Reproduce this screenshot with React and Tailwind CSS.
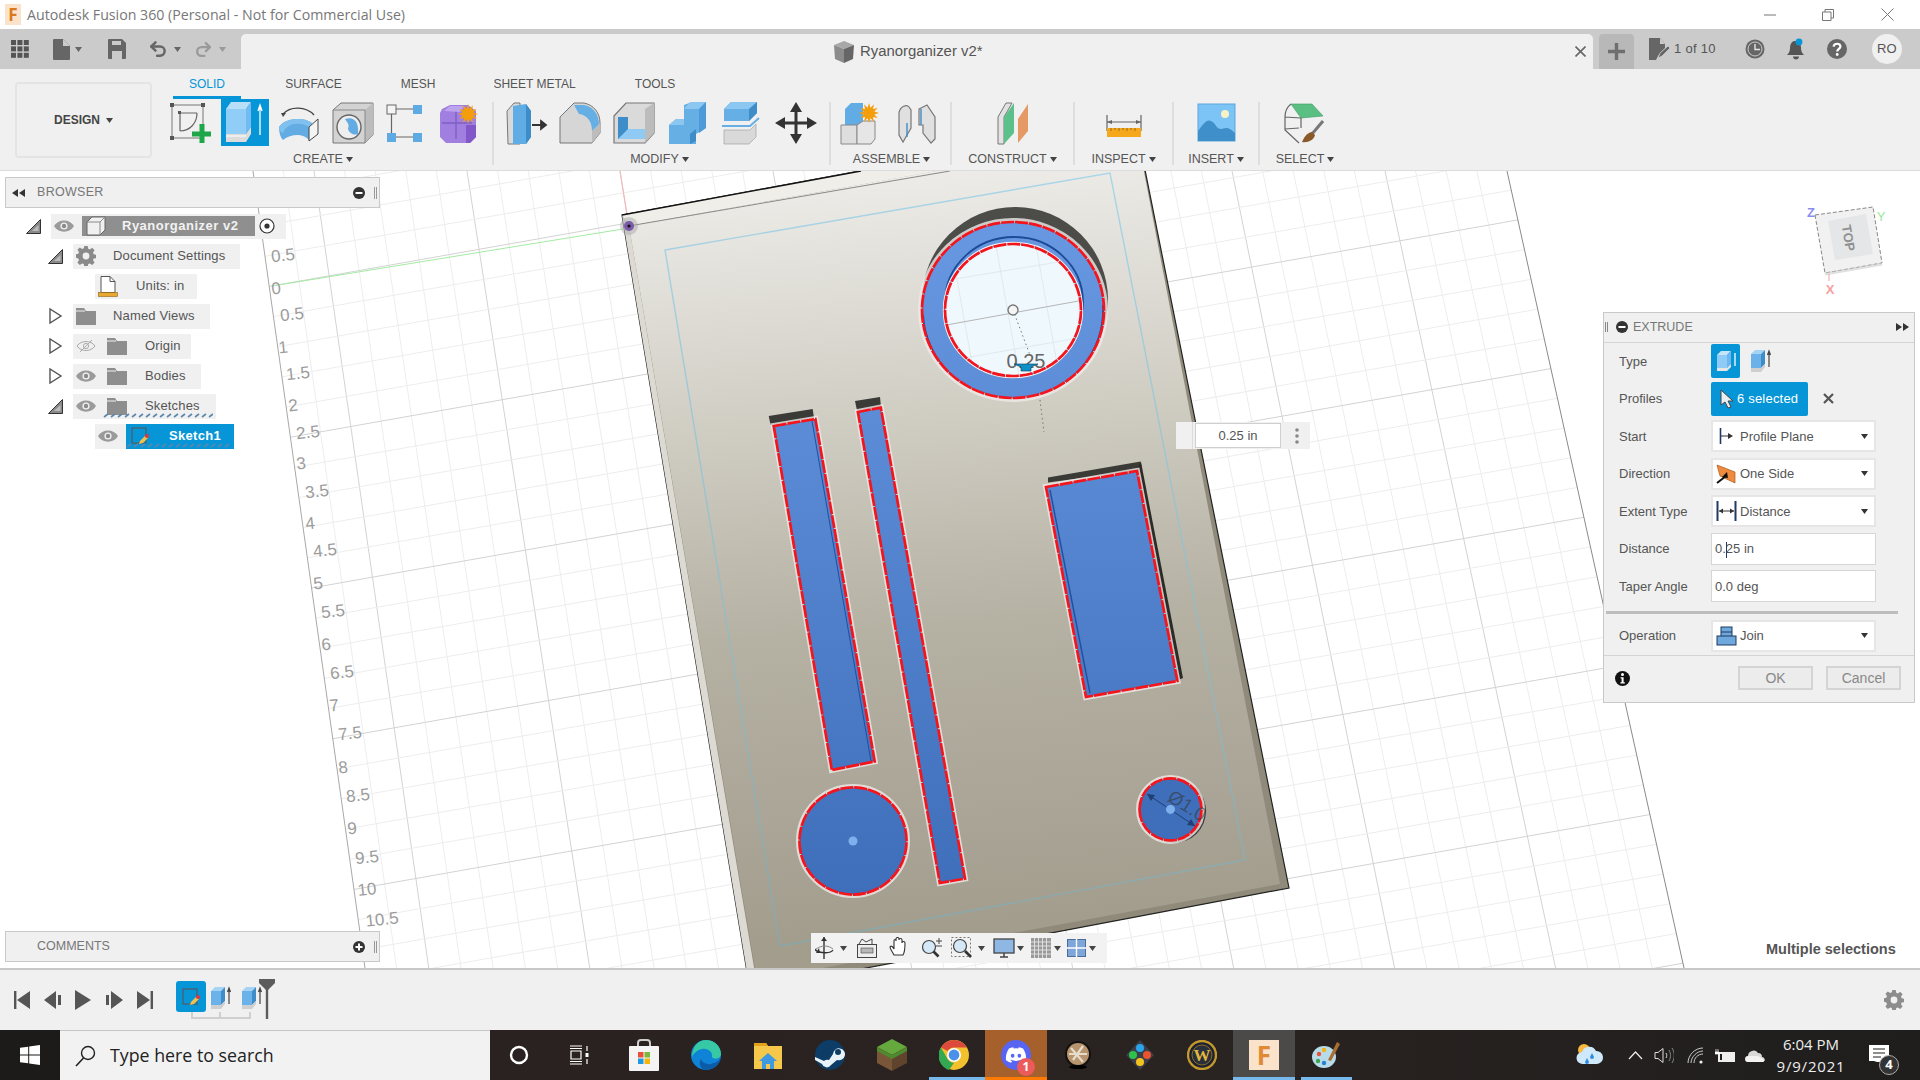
import React from "react";
import { Undo2, Redo2 } from "lucide-react";
import { FaDiscord } from "react-icons/fa";

// shared little glyphs
const Caret = ({ className = "", fill = "#444" }) => (
  <svg width="7" height="5" viewBox="0 0 7 5" className={className}>
    <path d="M0 0h7L3.5 5z" fill={fill} />
  </svg>
);

const Ico = ({ children, w = 44, h = 44, className = "" }) => (
  <svg width={w} height={h} viewBox={`0 0 ${w} ${h}`} className={`shrink-0 ${className}`}>
    {children}
  </svg>
);

const Star = ({ x, y, r = 9 }) => {
  const pts = [];
  for (let i = 0; i < 24; i++) {
    const a = (i * Math.PI) / 12;
    const rr = i % 2 ? r * 0.55 : r;
    pts.push(`${x + rr * Math.cos(a)},${y + rr * Math.sin(a)}`);
  }
  return <polygon points={pts.join(" ")} fill="#f59e0b" />;
};

const Gear = ({ size = 20, fill = "#8a8a8a" }) => (
  <svg width={size} height={size} viewBox="0 0 20 20" className="shrink-0">
    <path
      fill={fill}
      fillRule="evenodd"
      d="M8.3 0h3.4l.5 2.7 1.7.7 2.3-1.6 2.4 2.4-1.6 2.3.7 1.7 2.7.5v3.4l-2.7.5-.7 1.7 1.6 2.3-2.4 2.4-2.3-1.6-1.7.7-.5 2.7H8.3l-.5-2.7-1.7-.7-2.3 1.6-2.4-2.4 1.6-2.3-.7-1.7L-.4 11.7V8.3l2.7-.5.7-1.7-1.6-2.3 2.4-2.4 2.3 1.6 1.7-.7zM10 6.6a3.4 3.4 0 1 0 0 6.8 3.4 3.4 0 0 0 0-6.8z"
    />
  </svg>
);

const Eye = ({ off }) => (
  <svg width="20" height="14" viewBox="0 0 20 14" className="shrink-0">
    {off ? (
      <g fill="none" stroke="#aaa" strokeWidth="1">
        <path d="M1 7c4-6 14-6 18 0-4 6-14 6-18 0z" />
        <circle cx="10" cy="7" r="2.6" />
        <path d="M4 13 16 1" />
      </g>
    ) : (
      <g>
        <path d="M0 7c4-7.5 16-7.5 20 0-4 7.5-16 7.5-20 0z" fill="#9a9a9a" />
        <circle cx="10" cy="7" r="3.6" fill="#f0f0f0" />
        <circle cx="10" cy="7" r="2.2" fill="#8a8a8a" />
      </g>
    )}
  </svg>
);

const Folder = () => (
  <svg width="20" height="17" viewBox="0 0 20 17" className="shrink-0">
    <path d="M0 0h8l2 3h10v14H0z" fill="#8e8e8e" />
    <path d="M0 3h9" stroke="#f0f0f0" strokeWidth="1" />
  </svg>
);

const SketchMini = () => (
  <svg width="20" height="20" viewBox="0 0 20 20" className="shrink-0">
    <rect x="2" y="2" width="14" height="15" fill="none" stroke="#505a66" strokeWidth="1.2" />
    <path d="m10 15 5-5 3 2-5 5-4 1z" fill="#f2c14e" />
    <circle cx="17" cy="10" r="2" fill="#e5343a" />
  </svg>
);

const ExtrudeMini = ({ w = 22, h = 24 }) => (
  <svg width={w} height={h} viewBox="0 0 22 24" className="shrink-0">
    <polygon points="1,5 5,1 15,1 11,5" fill="#a5d3f4" />
    <polygon points="1,5 11,5 11,19 1,19" fill="#6cb2ea" />
    <polygon points="11,5 15,1 15,15 11,19" fill="#3f8dc8" />
    <polygon points="1,19 11,19 15,15 15,18 11,23 1,23" fill="#cfcfcf" />
    <path d="M19 18V3M17.5 6 19 2l1.5 4" fill="none" stroke="#444" strokeWidth="1.2" />
  </svg>
);

const Squiggle = ({ className }) => (
  <svg height="5" className={`absolute ${className}`} width="100%">
    <defs>
      <pattern id="squig" width="7" height="5" patternUnits="userSpaceOnUse">
        <path d="M1 4 5 1" stroke="#5b86ad" strokeWidth="1.6" />
      </pattern>
    </defs>
    <rect width="100%" height="5" fill="url(#squig)" />
  </svg>
);

// ---- ribbon icons ----
const SketchIcon = () => (
  <Ico>
    <rect x="3" y="4" width="31" height="33" fill="none" stroke="#777" strokeWidth="1" />
    {[[1, 2], [32, 2], [1, 35]].map(([x, y]) => (
      <rect key={x + "-" + y} x={x} y={y} width="4" height="4" fill="#555" />
    ))}
    <path d="M11 12h17M11 12v18M28 12c0 10-7 18-17 18" fill="none" stroke="#666" strokeWidth="1.2" />
    <rect x="9" y="10" width="3" height="3" fill="#555" />
    <path d="M33 23v19M23 33h19" stroke="#1ea64a" strokeWidth="5" />
  </Ico>
);

const ExtrudeIcon = () => (
  <div className="flex h-[47px] w-[48px] shrink-0 items-center justify-center bg-[#0696d7]">
    <Ico w={48} h={47}>
      <polygon points="5,10 10,3 30,3 25,10" fill="#b9def8" />
      <polygon points="5,10 25,10 25,35 5,35" fill="#90cdf7" />
      <polygon points="25,10 30,3 30,28 25,35" fill="#72bbf0" />
      <polygon points="5,35 25,35 30,28 30,35 25,43 5,43" fill="#dcdcdc" />
      <path d="M5 37h20" stroke="#fff" strokeWidth="1" />
      <path d="M39 36V7M37 12l2-6 2 6" fill="none" stroke="#fff" strokeWidth="1.3" />
    </Ico>
  </div>
);

const RevolveIcon = () => (
  <Ico>
    <path d="M6 13C13 5 29 5 37 14" fill="none" stroke="#444" strokeWidth="1.3" />
    <path d="M4 12 6 16 9 12z" fill="#444" />
    <path d="M2 26c6-10 26-10 33-4l-3 17c-6-7-18-6-26 0-3-3-4-8-4-13z" fill="#62ace3" />
    <path d="M2 26c6-10 26-10 33-4l-3 4c-8-5-22-5-26 6-3-1-4-4-4-6z" fill="#7fc0ef" />
    <polygon points="32,26 41,18 41,33 32,40" fill="#f4f4f4" stroke="#444" strokeWidth="1" />
  </Ico>
);

const HoleIcon = () => (
  <Ico>
    <polygon points="2,9 10,2 42,2 42,34 34,42 2,42" fill="#d3d3d3" stroke="#777" strokeWidth="1" />
    <polygon points="34,9 42,2 42,34 34,42" fill="#bcbcbc" />
    <path d="M2 9h32v33" fill="none" stroke="#888" strokeWidth="1" />
    <ellipse cx="18" cy="26" rx="12" ry="12" fill="#eee" stroke="#666" strokeWidth="1.4" />
    <path d="M14 18c10-3 14 4 13 15-5 2-10-2-10-6 2-3-1-6-3-9z" fill="#62ace3" />
  </Ico>
);

const PatternIcon = () => (
  <Ico>
    <rect x="5" y="4" width="9" height="9" fill="#f4f4f4" stroke="#666" />
    <rect x="31" y="4" width="9" height="9" fill="#5eaae3" />
    <rect x="5" y="32" width="9" height="9" fill="#5eaae3" />
    <rect x="31" y="32" width="9" height="9" fill="#5eaae3" />
    <path d="M14 8h17M14 36h17M9.5 13v19" stroke="#666" strokeWidth="1.2" />
  </Ico>
);

const FormIcon = () => (
  <Ico>
    <path d="M6 8 14 4h18l8 6v26l-6 6H10l-6-6V12z" fill="#a07fe0" />
    <path d="M6 22h30M20 8v30" stroke="#7f5fc4" strokeWidth="1.4" />
    <path d="M30 24h10v12l-6 6h-4z" fill="#8258c9" />
    <path d="M8 10 14 5h14l-4 6z" fill="#bca4ee" />
    <Star x={32} y={13} r={10} />
  </Ico>
);

const PressPullIcon = () => (
  <Ico>
    <polygon points="3,10 10,2 16,2 16,43 4,43" fill="#d9d9d9" stroke="#777" strokeWidth="1" />
    <polygon points="9,5 22,3 27,10 27,36 22,43 9,43" fill="#60ace5" />
    <polygon points="22,3 27,10 27,36 22,43" fill="#3e8dc9" />
    <path d="M28 24h12M37 20l5 4-5 4z" stroke="#333" strokeWidth="1.8" fill="#333" />
  </Ico>
);

const FilletIcon = () => (
  <Ico>
    <path d="M2 16 16 2h10c10 2 16 10 16 20v10l-8 10H2z" fill="#d6d6d6" stroke="#777" strokeWidth="1" />
    <path d="M16 4h10c10 2 15 10 15 20l-7 6c0-10-5-16-13-17z" fill="#66afe5" />
    <polygon points="34,30 42,22 42,32 34,42" fill="#bcbcbc" />
  </Ico>
);

const ChamferIcon = () => (
  <Ico>
    <polygon points="2,15 14,2 42,2 42,32 33,42 2,42" fill="#dadada" stroke="#777" strokeWidth="1.2" />
    <polygon points="33,8 42,2 42,32 33,42" fill="#bcbcbc" />
    <polygon points="6,16 16,16 16,28 33,28 33,38 6,38" fill="#3f8dc8" />
    <polygon points="16,28 33,28 33,38 6,38" fill="#8fcaf5" />
  </Ico>
);

const CombineIcon = () => (
  <Ico>
    <polygon points="3,24 10,18 18,18 18,4 26,1 40,1 40,27 30,33 30,43 3,43" fill="#66afe5" />
    <polygon points="18,8 24,1 40,1 33,8" fill="#8cc7f2" />
    <polygon points="33,8 40,1 40,27 33,32" fill="#4c9bd8" />
    <polygon points="3,24 10,18 18,18 18,24" fill="#8cc7f2" />
    <polygon points="24,33 30,28 30,40 24,43" fill="#3f8dc8" />
  </Ico>
);

const OffsetIcon = () => (
  <Ico>
    <polygon points="4,8 11,1 37,1 37,12 29,20 4,20" fill="#66afe5" />
    <polygon points="4,8 11,1 37,1 29,8" fill="#8cc7f2" />
    <polygon points="29,8 37,1 37,12 29,20" fill="#3f8dc8" />
    <path d="M2 25h28l9-8" fill="none" stroke="#66afe5" strokeWidth="2" />
    <polygon points="4,29 30,29 36,23 36,36 29,43 4,43" fill="#d9d9d9" stroke="#999" strokeWidth=".6" />
  </Ico>
);

const MoveIcon = () => (
  <Ico>
    <path d="M22 5v34M5 22h34" stroke="#333" strokeWidth="3" />
    <path d="m22 1 6 10H16zM22 43l6-10H16zM1 22l10-6v12zM43 22l-10-6v12z" fill="#333" />
  </Ico>
);

const ComponentIcon = () => (
  <Ico>
    <polygon points="6,8 12,2 24,2 24,26 6,26" fill="#62ace5" />
    <polygon points="2,24 18,24 18,43 2,43" fill="#dedede" stroke="#888" strokeWidth="1" />
    <polygon points="18,24 24,20 36,20 36,38 32,43 18,43" fill="#e6e6e6" stroke="#888" strokeWidth="1" />
    <Star x={30} y={12} r={10} />
  </Ico>
);

const JointIcon = () => (
  <Ico>
    <path d="M4 12c1-7 8-9 10-6l2 3v18l-8 14-4-7z" fill="#e0e0e0" stroke="#777" strokeWidth="1.2" />
    <path d="M24 8l8-4 8 12v22l-4 4-8-10V24h-4z" fill="#e0e0e0" stroke="#777" strokeWidth="1.2" />
    <path d="M12 22v14M26 8v16" stroke="#3f8dc8" strokeWidth="1.4" />
  </Ico>
);

const ConstructIcon = () => (
  <Ico>
    <polygon points="7,16 15,2 21,2 13,16 13,43 7,43" fill="#e2e2e2" stroke="#777" strokeWidth="1" />
    <polygon points="13,16 23,2 23,32 13,43" fill="#5cc08a" />
    <polygon points="27,18 37,3 37,30 27,42" fill="#e59a66" />
  </Ico>
);

const InspectIcon = () => (
  <Ico>
    <path d="M5 14v16M39 14v16M5 21h34" stroke="#666" strokeWidth="1.2" fill="none" />
    <path d="m5 21 5-2v4zM39 21l-5-2v4z" fill="#666" />
    <rect x="5" y="27" width="34" height="9" fill="#f5a81c" />
    <path d="M9 27v3M13 27v2M17 27v3M21 27v2M25 27v3M29 27v2M33 27v3" stroke="#8a5a10" strokeWidth=".8" />
  </Ico>
);

const InsertIcon = () => (
  <Ico>
    <rect x="4" y="3" width="37" height="37" fill="#7cc4f5" stroke="#5aa6dc" />
    <circle cx="31" cy="13" r="4" fill="#f7f3c6" />
    <path d="M4 40V30c6-8 9-12 13-10 5 2 5 8 10 8 3 0 6-4 14 4v8z" fill="#3f8fca" />
  </Ico>
);

const SelectIcon = () => (
  <Ico>
    <polygon points="8,3 29,3 40,15 18,17" fill="#5bbf84" stroke="#3d9a63" strokeWidth=".6" />
    <path d="M8 3c-4 3-6 8-6 13l16 1M2 16v13l14 13M18 17v10M2 28l14-1" fill="none" stroke="#666" strokeWidth="1.2" />
    <path d="m40 20-11 13" stroke="#777" strokeWidth="3" />
    <path d="M29 31c-6 1-8 6-10 10 6 1 12-2 13-7z" fill="#8a5a2b" />
  </Ico>
);

const Cell = ({ children, className = "w-[54px]" }) => (
  <div className={`flex shrink-0 items-center justify-center ${className}`}>{children}</div>
);

const Group = ({ label, className, labelClass = "", children }) => (
  <div className={`flex shrink-0 flex-col ${className}`}>
    <div className="flex h-[47px] items-center">{children}</div>
    <div className={`mt-[4px] flex items-center justify-center gap-[3px] text-[12.5px] text-[#555] ${labelClass}`}>
      {label}
      <Caret />
    </div>
  </div>
);

const Divider = () => <div className="mt-[3px] h-[63px] w-[2px] shrink-0 bg-[#dedede]" />;

const Ribbon = () => (
  <div className="flex h-[102px] shrink-0 border-b border-[#dcdcdc] bg-[#f0f0f0] pl-[15px]">
    <div className="mt-[13px] flex h-[76px] w-[137px] items-center justify-center gap-[6px] rounded-[4px] border-2 border-[#e4e4e4] text-[12px] font-bold text-[#444]">
      DESIGN
      <Caret />
    </div>
    <div className="ml-[12px] flex flex-col">
      <div className="flex h-[30px] pl-[9px] text-[12px] text-[#555]">
        <div className="flex w-[68px] items-center justify-center border-b-[3px] border-[#0696d7] pt-[2px] text-[#0696d7]">SOLID</div>
        <div className="flex w-[145px] items-center justify-center">SURFACE</div>
        <div className="flex w-[64px] items-center justify-center">MESH</div>
        <div className="flex w-[169px] items-center justify-center">SHEET METAL</div>
        <div className="flex w-[72px] items-center justify-center">TOOLS</div>
      </div>
      <div className="flex">
        <Group label="CREATE" className="w-[328px]" labelClass="mr-[10px]">
          <Cell><SketchIcon /></Cell>
          <Cell><ExtrudeIcon /></Cell>
          <Cell><RevolveIcon /></Cell>
          <Cell><HoleIcon /></Cell>
          <Cell className="w-[48px]"><PatternIcon /></Cell>
          <Cell className="w-[60px]"><FormIcon /></Cell>
        </Group>
        <Divider />
        <Group label="MODIFY" className="w-[335px] pl-[4px]" labelClass="mr-[8px]">
          <Cell className="w-[55px]"><PressPullIcon /></Cell>
          <Cell><FilletIcon /></Cell>
          <Cell><ChamferIcon /></Cell>
          <Cell><CombineIcon /></Cell>
          <Cell><OffsetIcon /></Cell>
          <Cell><MoveIcon /></Cell>
        </Group>
        <Divider />
        <Group label="ASSEMBLE" className="w-[119px] pl-[2px]">
          <Cell className="w-[56px]"><ComponentIcon /></Cell>
          <Cell className="w-[56px]"><JointIcon /></Cell>
        </Group>
        <Divider />
        <Group label="CONSTRUCT" className="w-[121px] items-center"><ConstructIcon /></Group>
        <Divider />
        <Group label="INSPECT" className="w-[97px] items-center"><InspectIcon /></Group>
        <Divider />
        <Group label="INSERT" className="w-[84px] items-center"><InsertIcon /></Group>
        <Divider />
        <Group label="SELECT" className="w-[90px] items-center"><SelectIcon /></Group>
      </div>
    </div>
  </div>
);

const TitleBar = () => (
  <div className="flex h-[29px] shrink-0 items-center bg-white font-['Open_Sans',sans-serif]">
    <div className="ml-[5px] flex h-[21px] w-[16px] items-center justify-center bg-[#fbe3cb] text-[17px] font-bold leading-none text-[#d9791c]">F</div>
    <div className="ml-[6px] text-[14.2px] text-[#777]">Autodesk Fusion 360 (Personal - Not for Commercial Use)</div>
    <div className="ml-auto flex items-center">
      <svg width="12" height="12" viewBox="0 0 12 12" className="mr-[46px]"><path d="M0 6h12" stroke="#777" /></svg>
      <svg width="12" height="12" viewBox="0 0 12 12" className="mr-[47px]">
        <path d="M.5 3h8.5v8.5H.5zM3 3V.5h8.5V9H9" fill="none" stroke="#777" />
      </svg>
      <svg width="13" height="13" viewBox="0 0 13 13" className="mr-[26px]"><path d="m.5.5 12 12M12.5.5l-12 12" stroke="#777" /></svg>
    </div>
  </div>
);

const TabBar = () => (
  <div className="flex h-[40px] shrink-0 bg-[#cbcbcb]">
    <div className="flex w-[241px] shrink-0 items-center pl-[11px]">
      <svg width="18" height="18" viewBox="0 0 18 18">
        {[0, 1, 2].flatMap((r) => [0, 1, 2].map((c) => (
          <rect key={`${r}${c}`} x={c * 6.4} y={r * 6.4} width="5" height="5" fill="#555" />
        )))}
      </svg>
      <svg width="17" height="21" viewBox="0 0 17 21" className="ml-[24px]">
        <path d="M0 1q0-1 1-1h9l7 7v13q0 1-1 1H1q-1 0-1-1z" fill="#666" />
        <path d="M10 0v7h7z" fill="#cbcbcb" />
      </svg>
      <Caret className="ml-[5px]" fill="#666" />
      <svg width="18" height="20" viewBox="0 0 18 20" className="ml-[26px]">
        <path d="M0 1q0-1 1-1h13l4 4v15q0 1-1 1H1q-1 0-1-1z" fill="#666" />
        <rect x="4" y="2" width="9" height="4" fill="#cbcbcb" />
        <rect x="4" y="12" width="10" height="8" fill="#cbcbcb" />
      </svg>
      <Undo2 size={20} strokeWidth={3} color="#666" className="ml-[22px]" />
      <Caret className="ml-[6px]" fill="#666" />
      <Redo2 size={19} strokeWidth={3} color="#9a9a9a" className="ml-[13px]" />
      <Caret className="ml-[6px]" fill="#9a9a9a" />
    </div>
    <div className="mt-[5px] flex w-[1352px] shrink-0 items-center rounded-t-[5px] bg-[#f0f0f0] pl-[593px]">
      <svg width="20" height="22" viewBox="0 0 20 22">
        <polygon points="0,4 10,0 20,4 10,8" fill="#a8a8a8" />
        <polygon points="0,4 10,8 10,22 1,18" fill="#8c8c8c" />
        <polygon points="10,8 20,4 19,18 10,22" fill="#666" />
      </svg>
      <div className="ml-[6px] text-[14.9px] text-[#555]">Ryanorganizer v2*</div>
      <svg width="11" height="11" viewBox="0 0 11 11" className="ml-[592px]"><path d="m.5.5 10 10M10.500.5l-10 10" stroke="#666" strokeWidth="1.6" /></svg>
    </div>
    <div className="ml-[6px] mt-[5px] flex w-[35px] items-center justify-center rounded-t-[4px] bg-[#b8b8b8]">
      <svg width="17" height="17" viewBox="0 0 17 17"><path d="M8.5 0v17M0 8.5h17" stroke="#6f6f6f" strokeWidth="3.4" /></svg>
    </div>
    <div className="flex items-center text-[#555]">
      <svg width="21" height="22" viewBox="0 0 21 22" className="ml-[15px]">
        <path d="M0 0h11l5 6v4l-7 8-2 4H0z" fill="#666" />
        <path d="M11 0v6h5z" fill="#cbcbcb" />
        <path d="m9 20 2-5 8-7 2 2-8 8z" fill="#666" stroke="#cbcbcb" strokeWidth=".8" />
      </svg>
      <div className="ml-[4px] text-[13px] tracking-[0.3px]">1 of 10</div>
      <svg width="20" height="20" viewBox="0 0 20 20" className="ml-[29px]">
        <circle cx="10" cy="10" r="9.5" fill="#666" />
        <circle cx="10" cy="10" r="7" fill="#666" stroke="#cbcbcb" strokeWidth="1" />
        <path d="M10 5v5.500h5" fill="none" stroke="#e6e6e6" strokeWidth="1.4" />
      </svg>
      <svg width="20" height="22" viewBox="0 0 20 22" className="ml-[21px]">
        <path d="M8 3c-3 1-4 4-4 7 0 3-1 5-3 7h17c-2-2-3-4-3-7 0-3-1-6-4-7z" fill="#555" />
        <path d="M7 18.500h6c0 4-6 4-6 0z" fill="#555" />
        <circle cx="13" cy="4" r="3.4" fill="#0696d7" />
      </svg>
      <svg width="20" height="20" viewBox="0 0 20 20" className="ml-[21px]">
        <circle cx="10" cy="10" r="10" fill="#666" />
        <path d="M6.600 7.600C7 3.800 13.400 3.800 13.400 7.600c0 2.400-3.200 2.400-3.200 5" fill="none" stroke="#fff" strokeWidth="2.2" />
        <circle cx="10.200" cy="15.500" r="1.4" fill="#fff" />
      </svg>
      <div className="ml-[25px] flex h-[30px] w-[30px] items-center justify-center rounded-full bg-[#f0f0f0] text-[13px] text-[#555]">RO</div>
    </div>
  </div>
);

// ---- browser panel ----
const TriOpen = () => (
  <svg width="15" height="15" viewBox="0 0 15 15" className="shrink-0">
    <path d="M.5 14.500 14.500.5v14z" fill="#8a8a8a" stroke="#333" strokeWidth="1" />
    <path d="M6 12 12.500 6v6z" fill="#bbb" />
  </svg>
);
const TriClosed = () => (
  <svg width="15" height="16" viewBox="0 0 15 16" className="shrink-0">
    <path d="M2 1v14L13 8z" fill="#fff" stroke="#555" strokeWidth="1.4" />
  </svg>
);

const TreeRow = ({ arrow, className, chip, children }) => (
  <div className={`flex h-[25px] items-center ${className}`}>
    {arrow === "open" && <TriOpen />}
    {arrow === "closed" && <TriClosed />}
    <div className={`relative flex h-[25px] items-center bg-[#f0f0f0] text-[13px] tracking-[0.15px] text-[#555] ${arrow ? "ml-[10px]" : ""} ${chip}`}>
      {children}
    </div>
  </div>
);

const BrowserPanel = () => (
  <div className="absolute left-[5px] top-[6px] w-[375px] font-['Liberation_Sans',sans-serif]">
    <div className="flex h-[31px] items-center border border-[#c9c9c9] bg-[#f0f0f0]">
      <svg width="13" height="8" viewBox="0 0 13 8" className="ml-[6px]"><path d="M6 0v8L0 4zM13 0v8L7 4z" fill="#333" /></svg>
      <div className="ml-[12px] text-[12.5px] tracking-[0.3px] text-[#777]">BROWSER</div>
      <svg width="12" height="12" viewBox="0 0 12 12" className="ml-auto"><circle cx="6" cy="6" r="6" fill="#333" /><path d="M2.500 6h7" stroke="#fff" strokeWidth="2" /></svg>
      <div className="ml-[9px] mr-[2px] h-[12px] w-[3px] border-x border-[#999]" />
    </div>
    <div className="mt-[5.5px] flex flex-col gap-[5px]">
      <TreeRow arrow="open" className="ml-[21px]" chip="w-[235px] pl-[3px]">
        <Eye />
        <div className="ml-[8px] flex h-[20px] w-[173px] items-center bg-[#8f8f8f] pl-[4px] text-[13px] font-bold tracking-[0.5px] text-[#f2f2f2]">
          <svg width="20" height="20" viewBox="0 0 20 20" className="shrink-0">
            <path d="M1 6 6 1h13v13l-5 5H1z" fill="#f0f0f0" stroke="#666" />
            <path d="M1 6h13v13M14 6l5-5" fill="none" stroke="#888" />
          </svg>
          <span className="ml-[16px]">Ryanorganizer v2</span>
        </div>
        <svg width="16" height="16" viewBox="0 0 16 16" className="ml-[4px]">
          <circle cx="8" cy="8" r="7" fill="#fff" stroke="#333" strokeWidth="1.2" />
          <circle cx="8" cy="8" r="2.600" fill="#333" />
        </svg>
      </TreeRow>
      <TreeRow arrow="open" className="ml-[43px]" chip="w-[167px] pl-[3px]">
        <Gear />
        <span className="ml-[17px]">Document Settings</span>
      </TreeRow>
      <TreeRow className="ml-[90px]" chip="w-[102px] pl-[3px]">
        <svg width="20" height="21" viewBox="0 0 20 21" className="shrink-0">
          <path d="M3 .5h9l5 5v11H3z" fill="#fff" stroke="#555" />
          <path d="M12 .5v5h5" fill="none" stroke="#555" />
          <rect x=".5" y="16.500" width="19" height="4" fill="#e8a832" stroke="#8a6316" strokeWidth=".6" />
        </svg>
        <span className="ml-[18px]">Units: in</span>
      </TreeRow>
      <TreeRow arrow="closed" className="ml-[43px]" chip="w-[137px] pl-[3px]">
        <Folder />
        <span className="ml-[17px]">Named Views</span>
      </TreeRow>
      <TreeRow arrow="closed" className="ml-[43px]" chip="w-[118px] pl-[3px]">
        <Eye off />
        <div className="ml-[11px]"><Folder /></div>
        <span className="ml-[18px]">Origin</span>
      </TreeRow>
      <TreeRow arrow="closed" className="ml-[43px]" chip="w-[128px] pl-[3px]">
        <Eye />
        <div className="ml-[11px]"><Folder /></div>
        <span className="ml-[18px]">Bodies</span>
      </TreeRow>
      <TreeRow arrow="open" className="ml-[43px]" chip="w-[143px] pl-[3px]">
        <Eye />
        <div className="ml-[11px]"><Folder /></div>
        <span className="ml-[18px]">Sketches</span>
        <div className="absolute bottom-[1px] left-[30px] right-[3px] h-[5px]"><Squiggle className="left-0 top-0" /></div>
      </TreeRow>
      <TreeRow className="ml-[90px]" chip="w-[139px] pl-[3px]">
        <Eye />
        <div className="relative ml-[8px] flex h-[25px] w-[108px] items-center bg-[#0696d7] pl-[4px] text-[13px] font-bold tracking-[0.3px] text-white">
          <SketchMini />
          <span className="ml-[19px]">Sketch1</span>
          <div className="absolute bottom-[1px] left-0 right-[4px] h-[5px]"><Squiggle className="left-0 top-0" /></div>
        </div>
      </TreeRow>
    </div>
  </div>
);

const CommentsPanel = () => (
  <div className="absolute bottom-[6px] left-[5px] flex h-[31px] w-[375px] items-center border border-[#c9c9c9] bg-[#f0f0f0] font-['Liberation_Sans',sans-serif]">
    <div className="ml-[31px] text-[12.5px] text-[#777]">COMMENTS</div>
    <svg width="12" height="12" viewBox="0 0 12 12" className="ml-auto"><circle cx="6" cy="6" r="6" fill="#333" /><path d="M2.500 6h7M6 2.500v7" stroke="#fff" strokeWidth="2" /></svg>
    <div className="ml-[9px] mr-[2px] h-[12px] w-[3px] border-x border-[#999]" />
  </div>
);

// ---- extrude dialog ----
const FieldRow = ({ label, children }) => (
  <div className="flex h-[37.5px] items-center">
    <div className="w-[107px] shrink-0 pl-[15px] text-[13px] text-[#555]">{label}</div>
    {children}
  </div>
);

const Select = ({ icon, text }) => (
  <div className="flex h-[32px] w-[165px] items-center border-2 border-[#e6e6e6] bg-white text-[13px] text-[#555]">
    <div className="flex w-[26px] shrink-0 justify-center">{icon}</div>
    <span className="ml-[1px]">{text}</span>
    <Caret className="ml-auto mr-[6px]" fill="#333" />
  </div>
);

const ExtrudePanel = () => (
  <div className="absolute left-[1603px] top-[141px] h-[391px] w-[312px] border border-[#c9c9c9] bg-[#f0f0f0] font-['Liberation_Sans',sans-serif]">
    <div className="flex h-[29.5px] items-center border-b border-[#d4d4d4]">
      <div className="ml-[1px] h-[10px] w-[3px] border-x border-[#888]" />
      <svg width="12" height="12" viewBox="0 0 12 12" className="ml-[8px]"><circle cx="6" cy="6" r="6" fill="#333" /><path d="M2.500 6h7" stroke="#fff" strokeWidth="2" /></svg>
      <div className="ml-[5px] text-[12.5px] text-[#777]">EXTRUDE</div>
      <svg width="13" height="8" viewBox="0 0 13 8" className="ml-auto mr-[5px]"><path d="M0 0v8l6-4zM7 0v8l6-4z" fill="#333" /></svg>
    </div>
    <FieldRow label="Type">
      <div className="flex h-[34px] w-[29px] items-center justify-center rounded-[2px] bg-[#0696d7]">
        <svg width="22" height="24" viewBox="0 0 22 24">
          <polygon points="2,6 6,2 16,2 12,6" fill="#c5e4fa" />
          <polygon points="2,6 12,6 12,19 2,19" fill="#8ecbf7" />
          <polygon points="12,6 16,2 16,15 12,19" fill="#6eb6ee" />
          <polygon points="2,19 12,19 16,15 16,18 12,22 2,22" fill="#e6e6e6" />
          <path d="M20 17V4" stroke="#fff" strokeWidth="1.3" />
        </svg>
      </div>
      <div className="ml-[10px]"><ExtrudeMini /></div>
    </FieldRow>
    <FieldRow label="Profiles">
      <div className="flex h-[34px] w-[97px] items-center rounded-[2px] bg-[#0696d7] pl-[9px] text-[13px] tracking-[0.2px] text-white">
        <svg width="13" height="20" viewBox="0 0 13 20" className="shrink-0">
          <path d="M1 1v15l4-3 3 6 3-1-3-6h5z" fill="#e8eef2" stroke="#444" strokeWidth="1" />
        </svg>
        <span className="ml-[4px]">6 selected</span>
      </div>
      <svg width="11" height="11" viewBox="0 0 11 11" className="ml-[15px]"><path d="m1 1 9 9M10 1l-9 9" stroke="#555" strokeWidth="2.2" /></svg>
    </FieldRow>
    <FieldRow label="Start">
      <Select
        text="Profile Plane"
        icon={
          <svg width="14" height="16" viewBox="0 0 14 16">
            <path d="M1.500 0v16" stroke="#1f3a63" strokeWidth="1.6" />
            <path d="M2 8h8" stroke="#333" strokeWidth="1" />
            <path d="m9 5 5 3-5 3z" fill="#333" />
          </svg>
        }
      />
    </FieldRow>
    <FieldRow label="Direction">
      <Select
        text="One Side"
        icon={
          <svg width="20" height="20" viewBox="0 0 20 20">
            <polygon points="1,1 19,8 19,19 4,12" fill="#f08a3c" stroke="#a65a1e" strokeWidth=".7" />
            <path d="m1 19 9-7" stroke="#111" strokeWidth="2" />
            <path d="m11 8 1 6-6-1z" fill="#111" />
          </svg>
        }
      />
    </FieldRow>
    <FieldRow label="Extent Type">
      <Select
        text="Distance"
        icon={
          <svg width="21" height="20" viewBox="0 0 21 20">
            <path d="M1.500 0v20M19.500 0v20" stroke="#1f3a63" strokeWidth="2" />
            <path d="M3 10h15" stroke="#333" />
            <path d="m3 10 4-2.500v5zM18 10l-4-2.500v5z" fill="#333" />
          </svg>
        }
      />
    </FieldRow>
    <FieldRow label="Distance">
      <div className="relative flex h-[32px] w-[165px] items-center border border-[#d6d6d6] bg-white pl-[3px] text-[13px] text-[#555]">
        0.25 in
        <div className="absolute left-[14px] top-[8px] h-[16px] w-px bg-[#1f3a63]" />
      </div>
    </FieldRow>
    <FieldRow label="Taper Angle">
      <div className="flex h-[32px] w-[165px] items-center border border-[#d6d6d6] bg-white pl-[3px] text-[13px] text-[#555]">0.0 deg</div>
    </FieldRow>
    <div className="ml-[2px] mt-[6px] h-[3px] w-[292px] bg-[#bdbdbd]" />
    <div className="mt-[3px]" />
    <FieldRow label="Operation">
      <Select
        text="Join"
        icon={
          <svg width="21" height="20" viewBox="0 0 21 20">
            <rect x="5" y="1" width="11" height="10" fill="#6fa8dc" stroke="#1f3a63" />
            <rect x="1" y="10" width="19" height="9" fill="#6fa8dc" stroke="#1f3a63" />
            <path d="M5 6h11" stroke="#1f3a63" />
          </svg>
        }
      />
    </FieldRow>
    <div className="flex h-[46px] items-center border-t border-[#d4d4d4]">
      <svg width="15" height="15" viewBox="0 0 15 15" className="ml-[11px]">
        <circle cx="7.500" cy="7.500" r="7.500" fill="#111" />
        <circle cx="7.500" cy="3.600" r="1.500" fill="#fff" />
        <path d="M5.600 6.200h3v5h1.200v1.400H5.400v-1.400h1.200V7.500h-1z" fill="#fff" />
      </svg>
      <div className="ml-[108px] flex h-[24px] w-[75px] items-center justify-center border-2 border-[#d4d4d4] bg-[#ececec] text-[14px] text-[#888]">OK</div>
      <div className="ml-[13px] flex h-[24px] w-[75px] items-center justify-center border-2 border-[#d4d4d4] bg-[#ececec] text-[14px] text-[#888]">Cancel</div>
    </div>
  </div>
);

const DistancePopup = () => (
  <div className="absolute left-[1176px] top-[251px] flex h-[27px] w-[134px] items-center bg-[#f0f0f0] font-['Liberation_Sans',sans-serif]">
    <div className="ml-[16px] mr-[2px] h-full w-[1px] bg-[#dcdcdc]" />
    <div className="flex h-[25px] w-[86px] items-center justify-center border border-[#cfcfcf] bg-white text-[13px] text-[#555]">0.25 in</div>
    <svg width="4" height="16" viewBox="0 0 4 16" className="ml-[14px]">
      <circle cx="2" cy="2" r="1.800" fill="#888" /><circle cx="2" cy="8" r="1.800" fill="#888" /><circle cx="2" cy="14" r="1.800" fill="#888" />
    </svg>
  </div>
);

const NavBar = () => (
  <div className="absolute left-[811px] top-[762px] flex h-[30px] w-[296px] items-center bg-[#f2f2f2] pl-[3px]">
    <svg width="20" height="22" viewBox="0 0 20 22">
      <path d="M10 0v22M2 12c-3 3 14 6 17 1" fill="none" stroke="#333" strokeWidth="1.4" />
      <path d="m10 0 3 4H7zM2 16l3-5 1 5z" fill="#333" />
      <path d="M2 12c6-4 12-4 17 0" fill="none" stroke="#888" />
    </svg>
    <Caret className="ml-[6px]" fill="#444" />
    <svg width="20" height="20" viewBox="0 0 20 20" className="ml-[10px]">
      <rect x=".5" y="6.500" width="19" height="13" fill="#eee" stroke="#444" />
      <rect x="4" y="10" width="12" height="5" fill="#b8b8b8" stroke="#444" strokeWidth=".6" />
      <path d="m2 6 3-5 4 3 6-3v5" fill="none" stroke="#444" />
    </svg>
    <svg width="20" height="22" viewBox="0 0 20 22" className="ml-[12px]">
      <path d="M5 18C3 14 1 12 1 10c1-2 3 0 4 2V4c0-2 2-2 2 0v-2c0-2 3-2 3 0v1c0-2 3-2 3 0v3c0-2 3-2 3 0 0 5 0 9-2 12z" fill="#fff" stroke="#333" strokeWidth="1.1" />
    </svg>
    <svg width="22" height="20" viewBox="0 0 22 20" className="ml-[12px]">
      <circle cx="8" cy="9" r="6.500" fill="#d4e8f7" stroke="#444" strokeWidth="1.2" />
      <path d="m12.500 13.500 5 5" stroke="#333" strokeWidth="2.6" />
      <path d="M18 0v6M15 3h6M15 8h6" stroke="#444" strokeWidth="1" />
    </svg>
    <svg width="22" height="22" viewBox="0 0 22 22" className="ml-[8px]">
      <rect x=".5" y=".5" width="19" height="19" fill="none" stroke="#777" strokeDasharray="2 2" />
      <circle cx="9" cy="9" r="6.500" fill="#d4e8f7" stroke="#444" strokeWidth="1.2" />
      <path d="m14 14 6 6" stroke="#333" strokeWidth="2.6" />
    </svg>
    <Caret className="ml-[5px]" fill="#444" />
    <svg width="22" height="20" viewBox="0 0 22 20" className="ml-[8px]">
      <rect x="1" y="1" width="20" height="14" fill="#8fb7e4" stroke="#444" strokeWidth="1.3" />
      <path d="M7 19h8M11 15v4" stroke="#444" strokeWidth="1.5" />
    </svg>
    <Caret className="ml-[2px]" fill="#444" />
    <svg width="20" height="20" viewBox="0 0 20 20" className="ml-[7px]">
      <rect width="20" height="20" fill="#9a9a9a" />
      <path d="M3.500 0v20M7.500 0v20M11.500 0v20M15.500 0v20M0 4h20M0 8h20M0 12h20M0 16h20" stroke="#eee" strokeWidth=".8" />
    </svg>
    <Caret className="ml-[3px]" fill="#444" />
    <svg width="19" height="18" viewBox="0 0 19 18" className="ml-[6px]">
      <rect x=".5" y=".5" width="18" height="17" fill="#7ea6d8" stroke="#4a6d99" />
      <path d="M9.500 0v18M0 9h19" stroke="#fff" strokeWidth="1.4" />
    </svg>
    <Caret className="ml-[3px]" fill="#444" />
  </div>
);

const ViewCube = () => (
  <div className="absolute left-[1800px] top-[28px] h-[104px] w-[95px] font-['Liberation_Sans',sans-serif]">
    <svg width="95" height="104" viewBox="1800 199 95 104">
      <polygon points="1815,215 1873,207 1882,263 1825,273" fill="#f1f1f1" stroke="#888" strokeDasharray="4 2" />
      <polygon points="1828,221 1866,214 1873,254 1835,260" fill="#e4e6e7" />
      <path d="M1825 274 1882 264" stroke="#ccc" strokeWidth="3" opacity=".6" />
      <text x="1811" y="217" fontSize="13" fontWeight="bold" fill="#8c8cf0" textAnchor="middle">Z</text>
      <text x="1881" y="221" fontSize="13" fill="#9be89b" textAnchor="middle">Y</text>
      <text x="1830" y="294" fontSize="13" fontWeight="bold" fill="#f5a0a0" textAnchor="middle">X</text>
      <path d="M1829 274v7" stroke="#f5a0a0" />
      <text x="1849" y="243" fontSize="13" fontWeight="bold" fill="#8f8f8f" textAnchor="middle" transform="rotate(80 1849 238)">TOP</text>
    </svg>
  </div>
);

// ---- canvas drawing ----
const rulerLabels = [
  ["0.5", 283, 255], ["0", 276, 288], ["0.5", 292, 314], ["1", 283, 347], ["1.5", 298, 373], ["2", 293, 405],
  ["2.5", 308, 432], ["3", 301, 463], ["3.5", 317, 491], ["4", 310, 523], ["4.5", 325, 550], ["5", 318, 583],
  ["5.5", 333, 611], ["6", 326, 644], ["6.5", 342, 672], ["7", 334, 705], ["7.5", 350, 733], ["8", 343, 767],
  ["8.5", 358, 795], ["9", 352, 828], ["9.5", 367, 857], ["10", 367, 889], ["10.5", 382, 919],
];

const gridV = [];
for (let i = -1; i <= 38; i++) {
  const top = 314 + i * 30.6;
  const slope = 0.14 + ((top - 253) / 1254) * 0.082;
  gridV.push({ i, x1: top, x2: top + slope * 797 });
}
const gridH = [];
for (let i = -4; i <= 31; i++) {
  const y = 281 + i * 30.9;
  gridH.push({ i, y1: y + 0.177 * 47, y2: y - 0.177 * 1400 });
}

const Halo = ({ d }) => <path d={d} fill="none" stroke="#eeeae8" strokeOpacity=".8" strokeWidth="6" />;
const Outline = ({ d }) => <path d={d} fill="none" stroke="#f4141c" strokeWidth="2.7" strokeDasharray="13 1" />;

const ell = (cx, cy, rx, ry) =>
  `M${cx - rx} ${cy}a${rx} ${ry} 0 1 0 ${rx * 2} 0a${rx} ${ry} 0 1 0 ${-rx * 2} 0z`;

const slot1 = "M773.7 426 815.4 419 874.7 761.5 831.8 770z";
const slot2 = "M857.9 412 880.8 407.6 965 878.6 939.8 883z";
const slot3 = "M1046 487 1137 471 1177.4 681 1086 697z";

const Scene = () => (
  <svg width="1920" height="797" viewBox="0 171 1920 797" className="absolute inset-0">
    <defs>
      <clipPath id="gridClip"><polygon points="253,171 1507,171 1684,968 365,968" /></clipPath>
      <clipPath id="holeClip"><ellipse cx="1013" cy="310" rx="68" ry="66" /></clipPath>
      <clipPath id="ringClip"><path d={ell(1013, 310, 91, 88)} /></clipPath>
      <linearGradient id="face" gradientUnits="userSpaceOnUse" x1="900" y1="170" x2="960" y2="930">
        <stop offset="0" stopColor="#edece8" />
        <stop offset=".33" stopColor="#cfccc2" />
        <stop offset=".6" stopColor="#b5b1a3" />
        <stop offset="1" stopColor="#a39d8e" />
      </linearGradient>
      <linearGradient id="blue" gradientUnits="userSpaceOnUse" x1="0" y1="220" x2="0" y2="890">
        <stop offset="0" stopColor="#6898e2" />
        <stop offset="1" stopColor="#3f6fba" />
      </linearGradient>
      <linearGradient id="sketchLine" gradientUnits="userSpaceOnUse" x1="0" y1="173" x2="0" y2="946">
        <stop offset="0" stopColor="#a9d5e8" />
        <stop offset="1" stopColor="#87a8ab" />
      </linearGradient>
    </defs>

    <g clipPath="url(#gridClip)">
      {gridV.map((l) => (
        <line key={"v" + l.i} x1={l.x1} y1="171" x2={l.x2} y2="968" stroke={(l.i + 40) % 5 === 0 ? "#d3d3d3" : "#ededed"} />
      ))}
      {gridH.map((l) => (
        <line key={"h" + l.i} x1="253" y1={l.y1} x2="1700" y2={l.y2} stroke={(l.i + 40) % 5 === 0 ? "#d3d3d3" : "#ededed"} />
      ))}
    </g>
    <line x1="253" y1="171" x2="365" y2="968" stroke="#a8a8a8" />
    <line x1="1507" y1="171" x2="1684" y2="968" stroke="#8a8a8a" />
    <line x1="272" y1="286" x2="623" y2="229" stroke="#a3eba3" />
    <line x1="620" y1="171" x2="628" y2="222" stroke="#f7b3b3" />

    {rulerLabels.map(([t, x, y]) => (
      <text key={t + y} x={x} y={y + 6} fontSize="17" fill="#9c9c9c" textAnchor="middle" fontFamily="Liberation Sans" transform={`rotate(-6 ${x} ${y})`}>
        {t}
      </text>
    ))}

    {/* plate */}
    <polygon points="622,215 1135,120 1289,888 750,990" fill="#8f8a7a" stroke="#222" strokeWidth="1.2" />
    <polygon points="622,215 1135,120 1140,135 629,226" fill="#efeee9" />
    <polygon points="622,215 629,226 757,985 750,990" fill="#dcdad2" />
    <polygon points="629,226 1137,135 1280,884 757,980" fill="url(#face)" />
    <path d="M629 226 950 171" stroke="#8a8a86" strokeWidth="1" />
    <path d="M622 215 861 171" stroke="#111" strokeWidth="1.4" />
    <polygon points="665,250 1110,173 1245,860 780,946" fill="none" stroke="url(#sketchLine)" strokeWidth="1.4" />

    {/* big round opening */}
    <ellipse cx="1015" cy="300" rx="93" ry="93" fill="#4c4c48" />
    <Halo d={ell(1013, 310, 92, 89)} />
    <path d={ell(1013, 310, 91, 88)} fill="url(#blue)" />
    <g clipPath="url(#ringClip)" fill="none" stroke="#1c4a96" strokeWidth="1.8">
      <ellipse cx="1014" cy="302" rx="69" ry="65" />
      <path d="M923 315A90 89 0 0 0 1103 305" />
    </g>
    <ellipse cx="1013" cy="310" rx="68" ry="66" fill="#eff8fd" />
    <g clipPath="url(#holeClip)" stroke="#dde4e8" strokeWidth=".8">
      <path d="M930 283 1095 256M930 364 1095 335" />
      <path d="M950 240 975 380M995 240 1020 380M1035 240 1060 380" />
      <path d="M930 328 1095 298" stroke="#b5b5b5" strokeWidth="1" />
    </g>
    <Outline d={ell(1013, 310, 91, 88)} />
    <ellipse cx="1013" cy="310" rx="69.500" ry="67.500" fill="none" stroke="#f2f2f2" strokeWidth="1.4" />
    <Outline d={ell(1013, 310, 68, 66)} />
    <path d="M1013 310 1030 355M1040 400 1044 432" stroke="#777" strokeDasharray="1.5 3" fill="none" />
    <circle cx="1013" cy="310" r="5" fill="#f4f4f4" stroke="#777" strokeWidth="1.4" />
    <text x="1026" y="368" fontSize="20" fill="#666" textAnchor="middle" fontFamily="Liberation Sans">0.25</text>
    <path d="M1014 364h24l-7 3v4h-10v-4z" fill="#0e90c8" stroke="#0b3954" strokeWidth=".6" />

    {/* slots */}
    <polygon points="768.7,416 812.7,409 814,418 770.6,425" fill="#3a3a36" />
    <polygon points="855,401 880,397 881,407 857,410.6" fill="#3a3a36" />
    <polygon points="1048,477.6 1140.7,461.5 1142,470 1048,482.6" fill="#3a3a36" />
    <polygon points="1137,468 1141,462 1183,678 1178,680" fill="#2b2b28" />
    <Halo d={slot1} />
    <Halo d={slot2} />
    <Halo d={slot3} />
    <path d={slot1} fill="url(#blue)" />
    <path d={slot2} fill="url(#blue)" />
    <path d={slot3} fill="url(#blue)" />
    <path d="M812 421 871 761" stroke="#1f4f9f" />
    <path d="M1050 490 1090 693" stroke="#1f4f9f" strokeWidth="1.4" />
    <Outline d={slot1} />
    <Outline d={slot2} />
    <Outline d={slot3} />

    {/* lower circles */}
    <Halo d={ell(853, 841, 54, 54)} />
    <path d={ell(853, 841, 53.6, 53.6)} fill="url(#blue)" />
    <Outline d={ell(853, 841, 53.6, 53.6)} />
    <circle cx="853" cy="841" r="4.5" fill="#7fb0ee" />

    <ellipse cx="1174" cy="811" rx="32" ry="32" fill="#3a3a36" />
    <Halo d={ell(1170.5, 809.4, 31.5, 31.5)} />
    <path d={ell(1170.5, 809.4, 31, 31)} fill="#3f6fba" />
    <Outline d={ell(1170.5, 809.4, 31, 31)} />
    <path d="M1147 794 1195 826" stroke="#1f3f73" />
    <path d="m1147 794 8 1-4 6zM1195 826l-8-1 4-6z" fill="#1f3f73" />
    <circle cx="1170.5" cy="809.4" r="4.5" fill="#7fb0ee" />
    <text x="1187" y="812" fontSize="19" fill="#333" fillOpacity=".55" textAnchor="middle" fontFamily="Liberation Sans" transform="rotate(32 1187 806)">Ø1.0</text>

    {/* origin */}
    <circle cx="629" cy="226" r="9" fill="#aaa" fillOpacity=".5" />
    <circle cx="629" cy="226" r="5" fill="#7a5aa8" />
    <circle cx="629" cy="226" r="1.6" fill="#111" />
  </svg>
);

const Canvas = () => (
  <div className="relative flex-1 overflow-hidden bg-white">
    <Scene />
    <BrowserPanel />
    <CommentsPanel />
    <ExtrudePanel />
    <DistancePopup />
    <NavBar />
    <ViewCube />
    <div className="absolute left-[1766px] top-[768px] font-['Liberation_Sans',sans-serif] text-[14.5px] font-bold text-[#555]">Multiple selections</div>
  </div>
);

const Timeline = () => (
  <div className="flex h-[62px] shrink-0 items-center border-t-2 border-[#c8c8c8] bg-[#f0f0f0] pl-[14px]">
    <svg width="16" height="18" viewBox="0 0 16 18"><path d="M0 0h2.400v18H0zM16 0v18L3 9z" fill="#555" /></svg>
    <svg width="17" height="18" viewBox="0 0 17 18" className="ml-[14px]"><path d="M12 0v18L0 9zM14 4h3v10h-3z" fill="#555" /></svg>
    <svg width="16" height="20" viewBox="0 0 16 20" className="ml-[14px]"><path d="M0 0v20l16-10z" fill="#555" /></svg>
    <svg width="17" height="18" viewBox="0 0 17 18" className="ml-[15px]"><path d="M5 0v18l12-9zM0 4h3v10H0z" fill="#555" /></svg>
    <svg width="16" height="18" viewBox="0 0 16 18" className="ml-[14px]"><path d="M0 0v18L13 9zM13.600 0H16v18h-2.400z" fill="#555" /></svg>
    <div className="relative ml-[23px] h-[52px] w-[100px]">
      <div className="absolute left-0 top-[7px] flex h-[31px] w-[30px] items-center justify-center rounded-[3px] bg-[#0696d7]"><SketchMini /></div>
      <div className="absolute left-[34px] top-[12px]"><ExtrudeMini /></div>
      <div className="absolute left-[65px] top-[12px]"><ExtrudeMini /></div>
      <div className="absolute left-[15px] top-[38px] h-[7px] w-[30px] border-x-2 border-b-2 border-[#cfcfcf]" />
      <div className="absolute left-[45px] top-[38px] h-[7px] w-[30px] border-r-2 border-b-2 border-[#cfcfcf]" />
      <svg width="16" height="40" viewBox="0 0 16 40" className="absolute left-[83px] top-[5px]">
        <path d="M0 0h16v4l-8 8-8-8z" fill="#5c5c5c" />
        <path d="M8 8v32" stroke="#5c5c5c" strokeWidth="2.4" />
      </svg>
    </div>
    <div className="ml-auto mr-[16px]"><Gear size={20} fill="#8c8c8c" /></div>
  </div>
);

// ---- taskbar ----
const TaskIcon = ({ children, className = "" }) => (
  <div className={`relative flex h-full w-[62px] shrink-0 items-center justify-center ${className}`}>{children}</div>
);

const Taskbar = () => (
  <div className="flex h-[50px] shrink-0 bg-[#1f1e1d] font-['Open_Sans',sans-serif] text-[#eee]">
    <div className="flex w-[60px] items-center justify-center bg-[#1c1b1a]">
      <svg width="20" height="20" viewBox="0 0 20 20"><path d="M0 2.800 8.200 1.700v7.900H0zM9.200 1.500 20 0v9.600H9.200zM0 10.400h8.200v7.900L0 17.200zM9.200 10.400H20V20L9.200 18.500z" fill="#fff" /></svg>
    </div>
    <div className="flex w-[430px] items-center border-t border-[#c6c6c6] bg-[#f2f2f2] pl-[15px] text-[17.8px] text-[#222]">
      <svg width="21" height="22" viewBox="0 0 21 22"><circle cx="13" cy="8" r="6.500" fill="none" stroke="#222" strokeWidth="1.4" /><path d="M8.500 13 1 21" stroke="#222" strokeWidth="1.6" /></svg>
      <span className="ml-[14px]">Type here to search</span>
    </div>
    <div className="flex flex-1 items-center bg-gradient-to-r from-[#2a2220] via-[#292321] to-[#1f1e1d]">
      <div className="flex h-full w-[58px] items-center justify-center">
        <svg width="20" height="20" viewBox="0 0 20 20"><circle cx="10" cy="10" r="8" fill="none" stroke="#fff" strokeWidth="2.4" /></svg>
      </div>
      <TaskIcon>
        <svg width="20" height="20" viewBox="0 0 20 20" fill="none" stroke="#fff" strokeWidth="1.2">
          <path d="M1 1h12M1 3.500h12M2 6h10v8H2zM1 16.500h12M1 19h12M18 1v5M18 14v5" />
          <rect x="16.500" y="8" width="3" height="4" fill="#fff" stroke="none" />
        </svg>
      </TaskIcon>
      <TaskIcon className="ml-[3px]">
        <svg width="30" height="32" viewBox="0 0 30 32">
          <path d="M9 8V4q0-3 3-3h6q3 0 3 3v4" fill="none" stroke="#ccc" strokeWidth="2" />
          <rect y="7" width="30" height="25" rx="1" fill="#f4f4f4" />
          <rect x="9" y="13" width="5.500" height="5.500" fill="#e8503a" /><rect x="15.500" y="13" width="5.500" height="5.500" fill="#7db83c" />
          <rect x="9" y="19.500" width="5.500" height="5.500" fill="#1e9be0" /><rect x="15.500" y="19.500" width="5.500" height="5.500" fill="#f5b50f" />
        </svg>
      </TaskIcon>
      <TaskIcon>
        <svg width="30" height="30" viewBox="0 0 30 30">
          <circle cx="15" cy="15" r="15" fill="#0f83d6" />
          <path d="M15 0C23 0 30 6 30 14c0 5-7 6-9 3 1-5-4-9-10-8C6 10 3 13 1 17 1 7 7 0 15 0z" fill="#37c9a6" />
          <path d="M30 17c-1 8-8 13-15 13-5 0-8-6-5-11 1 4 8 7 12 4 3 0 6-2 8-6z" fill="#0a5ca8" />
        </svg>
      </TaskIcon>
      <TaskIcon>
        <svg width="28" height="28" viewBox="0 0 28 28">
          <path d="M0 2h12l2 3h14v23H0z" fill="#f5c84c" />
          <path d="M0 2h12l2 3H0z" fill="#e2a21a" />
          <path d="M8 28v-8h-3l9-8 9 8h-3v8h-4v-5h-4v5z" fill="#3d9ae0" />
        </svg>
      </TaskIcon>
      <TaskIcon>
        <svg width="30" height="30" viewBox="0 0 30 30">
          <circle cx="15" cy="15" r="15" fill="#0d3d66" />
          <path d="M0 17 9 21a5 5 0 0 1 5-1l4-6a6 6 0 1 1 4 6l-6 5a5 5 0 0 1-9-1L0 20z" fill="#e9f2f7" />
          <circle cx="23" cy="12" r="3" fill="#0d3d66" />
        </svg>
      </TaskIcon>
      <TaskIcon>
        <svg width="30" height="32" viewBox="0 0 30 32">
          <polygon points="15,0 30,8 15,16 0,8" fill="#65a83e" />
          <polygon points="0,8 15,16 15,32 0,24" fill="#7a5638" />
          <polygon points="30,8 15,16 15,32 30,24" fill="#5f432c" />
          <polygon points="0,8 15,16 30,8 30,12 15,20 0,12" fill="#4f8a2f" />
        </svg>
      </TaskIcon>
      <TaskIcon>
        <svg width="30" height="30" viewBox="0 0 30 30">
          <circle cx="15" cy="15" r="15" fill="#f2c12e" />
          <path d="M15 0a15 15 0 0 1 13 7.500H15A7.500 7.500 0 0 0 8.500 11L2 7.500A15 15 0 0 1 15 0z" fill="#dc4a3c" />
          <path d="M2 7.500 8.500 19a7.500 7.500 0 0 0 6.500 3.700L10 30A15 15 0 0 1 2 7.500z" fill="#34a853" />
          <circle cx="15" cy="15" r="7" fill="#fff" /><circle cx="15" cy="15" r="5.400" fill="#4d90e8" />
        </svg>
        <div className="absolute bottom-0 left-[6px] right-0 h-[3px] bg-[#76b9ed]" />
      </TaskIcon>
      <TaskIcon className="bg-[#a5602c]">
        <div className="relative flex h-[30px] w-[30px] items-center justify-center rounded-full bg-[#5865f2]">
          <FaDiscord size={22} color="#fff" />
          <div className="absolute bottom-[-6px] right-[-4px] flex h-[18px] w-[18px] items-center justify-center rounded-full bg-[#ed5a5a] text-[12px] font-bold text-white">1</div>
        </div>
        <div className="absolute bottom-0 left-0 right-0 h-[3px] bg-[#ff7a00]" />
      </TaskIcon>
      <TaskIcon>
        <svg width="26" height="30" viewBox="0 0 26 30">
          <circle cx="13" cy="14" r="13" fill="#111" />
          <circle cx="13" cy="14" r="11" fill="#b7946e" />
          <path d="M6 8 18 22M8 20 18 6M4 14h18" stroke="#e6dccb" strokeWidth="2.2" />
          <ellipse cx="13" cy="27" rx="9" ry="2" fill="#000" />
        </svg>
      </TaskIcon>
      <TaskIcon>
        <svg width="28" height="30" viewBox="0 0 28 30">
          <polygon points="14,0 28,15 14,30 0,15" fill="#3a3f4a" />
          <circle cx="14" cy="8" r="4" fill="#2aa5ea" /><circle cx="7" cy="15" r="4" fill="#2ec24b" />
          <circle cx="21" cy="15" r="4" fill="#e9532d" /><circle cx="14" cy="22" r="4" fill="#f4c21f" />
        </svg>
      </TaskIcon>
      <TaskIcon>
        <svg width="30" height="30" viewBox="0 0 30 30">
          <circle cx="15" cy="15" r="14" fill="#1c2230" stroke="#c49a2c" strokeWidth="2.4" />
          <circle cx="15" cy="15" r="10" fill="#2a2f3d" stroke="#8a6c20" />
          <text x="15" y="21" fontSize="17" fontWeight="bold" fill="#e2b93c" textAnchor="middle" fontFamily="Liberation Serif">W</text>
        </svg>
      </TaskIcon>
      <TaskIcon className="bg-[#4c4a48]">
        <div className="flex h-[30px] w-[30px] items-center justify-center bg-[#fbe3cb] text-[26px] font-bold leading-none text-[#e08a34]">F</div>
        <div className="absolute bottom-0 left-0 right-0 h-[3px] bg-[#76b9ed]" />
      </TaskIcon>
      <TaskIcon>
        <svg width="30" height="30" viewBox="0 0 30 30">
          <ellipse cx="13" cy="17" rx="12" ry="11" fill="#b8dbe9" />
          <circle cx="8" cy="14" r="2.200" fill="#e8503a" /><circle cx="13" cy="10" r="2.200" fill="#f5b50f" />
          <circle cx="7" cy="21" r="2.200" fill="#3fa34d" /><circle cx="13" cy="23" r="2.200" fill="#2d7fd0" />
          <path d="m17 20 9-18 3 2-9 17z" fill="#a86e32" />
        </svg>
        <div className="absolute bottom-0 left-[6px] right-[5px] h-[3px] bg-[#76b9ed]" />
      </TaskIcon>
      <svg width="28" height="22" viewBox="0 0 28 22" className="ml-[219px] shrink-0">
        <circle cx="8" cy="6" r="6" fill="#f5b942" />
        <path d="M7 20a6 6 0 0 1-1-12 7.500 7.500 0 0 1 14-1 6.500 6.500 0 0 1 1 13z" fill="#cfe9fb" />
        <path d="M16 9l-2 4a2 2 0 0 0 4 0zM11 14l-2 4a2 2 0 0 0 4 0z" fill="#2d8ee0" />
      </svg>
      <svg width="15" height="9" viewBox="0 0 15 9" className="ml-[24px] shrink-0"><path d="m1 8 6.500-7L14 8" fill="none" stroke="#eee" strokeWidth="1.2" /></svg>
      <svg width="20" height="17" viewBox="0 0 20 17" fill="none" stroke="#ddd" className="ml-[11px] shrink-0">
        <path d="M1 5.500h3l5-4v14l-5-4H1zM12 6c1 2 1 3 0 5" />
        <path d="M15 3c2 4 2 7 0 11M18 1c3 5 3 10 0 15" stroke="#888" />
      </svg>
      <svg width="17" height="17" viewBox="0 0 17 17" fill="none" stroke="#ccc" className="ml-[13px] shrink-0">
        <path d="M1 16C1 8 8 1 16 1M4 16c0-6 6-12 12-12M7 16c0-5 4-9 9-9" />
        <circle cx="14" cy="15" r="1.600" fill="#eee" stroke="none" />
      </svg>
      <svg width="20" height="13" viewBox="0 0 20 13" className="ml-[11px] shrink-0">
        <rect x="3.500" y="3.500" width="16" height="9" fill="#eee" stroke="#eee" />
        <path d="M1 0v3M3 0v3M0 3h4v2H0z" stroke="#fff" strokeWidth=".7" fill="#fff" />
        <rect x="5" y="5" width="2" height="6" fill="#1f1e1d" />
      </svg>
      <svg width="20" height="13" viewBox="0 0 20 13" className="ml-[10px] shrink-0">
        <path d="M3 13a3 3 0 0 1 0-6 5.500 5.500 0 0 1 10-3 4 4 0 0 1 4 4 2.500 2.500 0 0 1 0 5z" fill="#d8d8d8" />
        <path d="M3 13a3 3 0 0 1 1-6h9l7 4-2 2z" fill="#f2f2f2" />
      </svg>
      <div className="ml-[1px] flex w-[90px] shrink-0 flex-col items-center text-[15px] leading-[22px]">
        <span>6:04 PM</span>
        <span className="tracking-[0.8px]">9/9/2021</span>
      </div>
      <div className="relative ml-[13px] h-[28px] w-[20px] shrink-0">
        <svg width="20" height="18" viewBox="0 0 20 18" className="absolute top-[4px]">
          <path d="M0 0h20v17H8l-3-1H0z" fill="#fff" />
          <path d="M4 4h12M4 8h12M4 12h8" stroke="#1f1e1d" />
        </svg>
        <div className="absolute left-[10px] top-[14px] flex h-[20px] w-[20px] items-center justify-center rounded-full border border-[#aaa] bg-[#333] text-[13px] font-bold text-white">4</div>
      </div>
    </div>
  </div>
);

export default function App() {
  return (
    <div className="flex h-[1080px] w-[1920px] flex-col overflow-hidden bg-white font-['Liberation_Sans',sans-serif]">
      <TitleBar />
      <TabBar />
      <Ribbon />
      <Canvas />
      <Timeline />
      <Taskbar />
    </div>
  );
}
